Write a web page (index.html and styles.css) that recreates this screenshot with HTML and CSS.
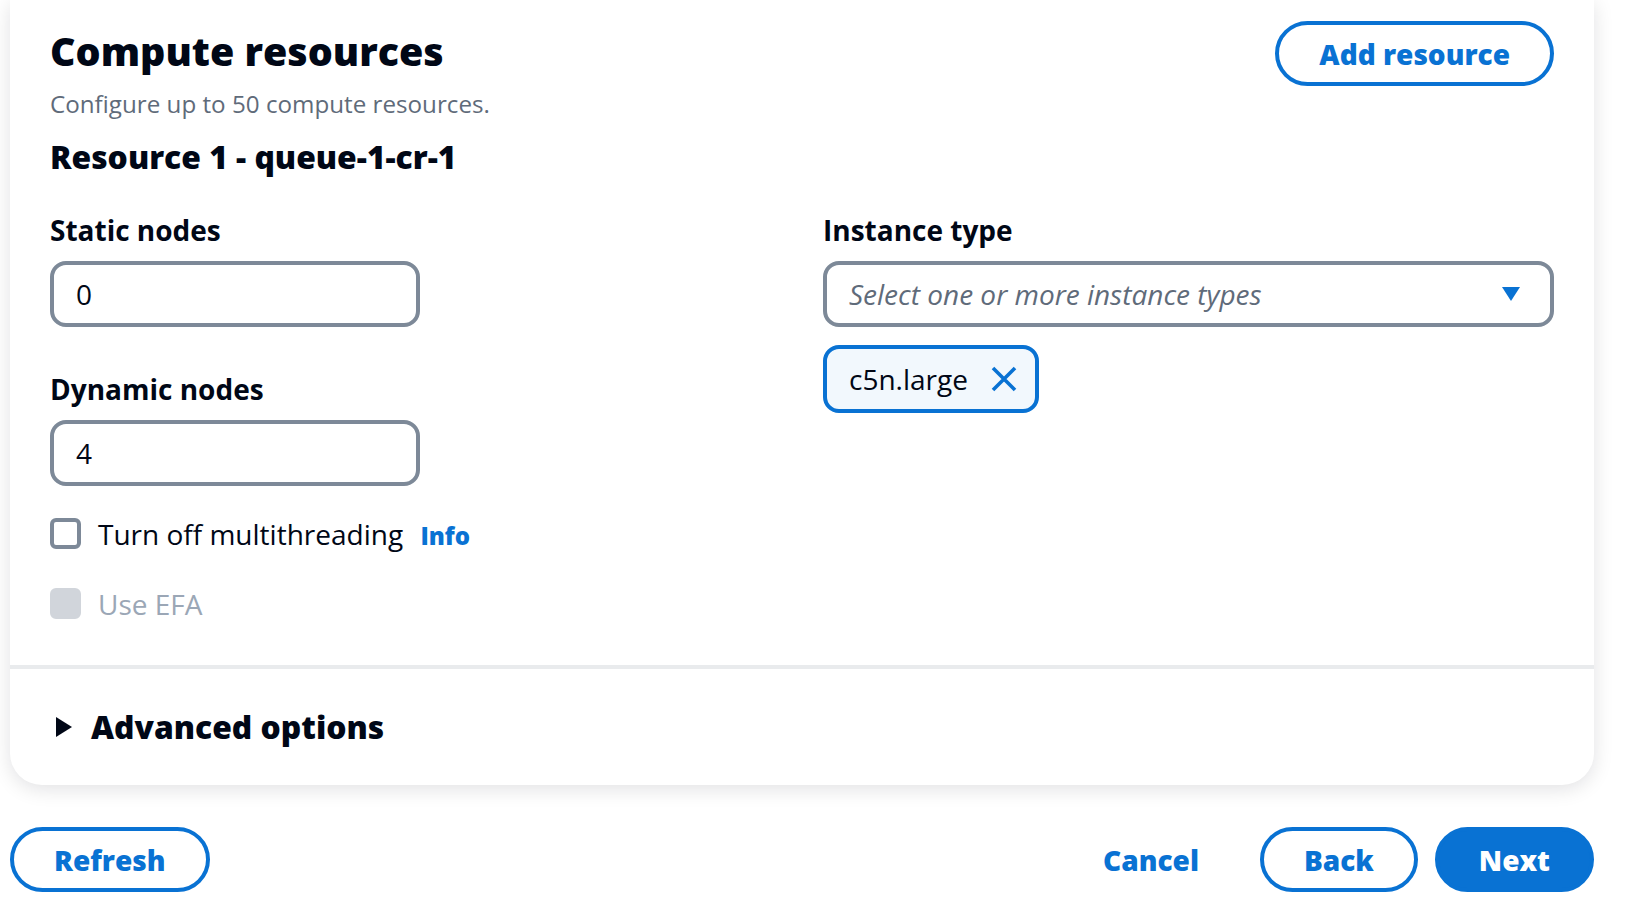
FILE: index.html
```html
<!DOCTYPE html>
<html>
<head>
    <meta charset="utf-8">
    <title>Compute resources</title>
    <link rel="stylesheet" href="styles.css">
</head>
<body>
    <div class="page">
        <div class="card">
            <div class="card-body">
                <div class="header">
                    <div class="header-text">
                        <h2 class="title">Compute resources</h2>
                        <p class="desc">Configure up to 50 compute resources.</p>
                    </div>
                    <button class="btn">Add resource</button>
                </div>
                <h3 class="resource-title">Resource 1 - queue-1-cr-1</h3>
                <div class="columns">
                    <div class="col">
                        <div class="field">
                            <label class="label" for="static_nodes">Static nodes</label>
                            <input class="input" type="text" id="static_nodes" value="0">
                        </div>
                        <div class="field field-next">
                            <label class="label" for="dynamic_nodes">Dynamic nodes</label>
                            <input class="input" type="text" id="dynamic_nodes" value="4">
                        </div>
                        <label class="check-row">
                            <input class="check" type="checkbox">
                            <span class="check-text">Turn off multithreading <a class="info" href="#">Info</a></span>
                        </label>
                        <label class="check-row check-row-next">
                            <input class="check" type="checkbox" disabled>
                            <span class="check-text disabled">Use EFA</span>
                        </label>
                    </div>
                    <div class="col">
                        <div class="field">
                            <span class="label">Instance type</span>
                            <div class="select">
                                <span class="placeholder">Select one or more instance types</span>
                                <svg class="caret" width="20" height="16" viewBox="0 0 20 16"><polygon points="1,1 19,1 10,15" fill="#0972d3"/></svg>
                            </div>
                        </div>
                        <div class="token">
                            <span>c5n.large</span>
                            <svg width="28" height="28" viewBox="0 0 28 28"><path d="M3 3 L25 25 M25 3 L3 25" stroke="#0972d3" stroke-width="3.6" fill="none"/></svg>
                        </div>
                    </div>
                </div>
            </div>
            <div class="expander">
                <svg width="32" height="32" viewBox="0 0 32 32"><polygon points="6,6 22,16 6,26" fill="#000716"/></svg>
                <span class="expander-title">Advanced options</span>
            </div>
        </div>
        <div class="footer">
            <button class="btn">Refresh</button>
            <div class="actions">
                <button class="btn btn-link">Cancel</button>
                <button class="btn">Back</button>
                <button class="btn btn-primary">Next</button>
            </div>
        </div>
    </div>
</body>
</html>
```

FILE: styles.css
```css
body {
    font-family: "Open Sans", "Liberation Sans", sans-serif;
    font-size: 28px;
    line-height: 40px;
    color: #000716;
    background-color: #FFF;
    margin: 0;
}

.page {
    padding: 0 58px 0 10px;
}

.card {
    background: #FFF;
    border-radius: 0 0 32px 32px;
    box-shadow: 0 4px 20px rgba(0, 7, 22, 0.12);
}

.card-body {
    padding: 21px 40px 41px;
}

.header {
    display: flex;
    justify-content: space-between;
    align-items: flex-start;
}

.title {
    font-size: 39.4px;
    font-weight: 800;
    line-height: 49px;
    margin: 6px 0 0;
}

.desc {
    font-size: 24.2px;
    line-height: 32px;
    color: #5f6b7a;
    margin: 12px 0 0;
}

.resource-title {
    font-size: 31.8px;
    font-weight: 800;
    line-height: 44px;
    margin: 15px 0 0;
}

.columns {
    display: grid;
    grid-template-columns: 1fr 1fr;
    column-gap: 42px;
    margin-top: 31px;
}

.field {
    display: flex;
    flex-direction: column;
    gap: 11px;
}

.field-next {
    margin-top: 42px;
}

.label {
    font-weight: 700;
}

.input {
    box-sizing: border-box;
    width: 370px;
    height: 66px;
    border: 4px solid #7d8998;
    border-radius: 16px;
    padding: 0 22px;
    font: inherit;
    color: #000716;
    outline: none;
}

.check-row {
    display: flex;
    align-items: flex-start;
    gap: 17px;
    margin-top: 28px;
}

.check {
    appearance: none;
    box-sizing: border-box;
    width: 31px;
    height: 31px;
    margin: 4px 0 0;
    border: 4px solid #7d8998;
    border-radius: 6px;
    background: #FFF;
}

.check:disabled {
    border-color: #d1d5db;
    background: #d1d5db;
}

.check-text.disabled {
    color: #9ba7b6;
}

.info {
    font-size: 24px;
    font-weight: 800;
    color: #0972d3;
    text-decoration: none;
    margin-left: 10px;
}

.select {
    box-sizing: border-box;
    height: 66px;
    border: 4px solid #7d8998;
    border-radius: 16px;
    padding: 0 29px 0 22px;
    display: flex;
    align-items: center;
    justify-content: space-between;
}

.placeholder {
    font-style: italic;
    color: #5f6b7a;
}

.token {
    box-sizing: border-box;
    display: inline-flex;
    align-self: flex-start;
    align-items: center;
    gap: 22px;
    height: 68px;
    margin-top: 18px;
    padding: 0 17px 0 22px;
    border: 4px solid #0972d3;
    border-radius: 16px;
    background: #f2f8fd;
}

.col {
    display: flex;
    flex-direction: column;
}

.expander {
    display: flex;
    align-items: center;
    gap: 9px;
    border-top: 4px solid #e9ebed;
    padding: 36px 40px;
}

.expander-title {
    font-size: 31.8px;
    font-weight: 800;
    line-height: 44px;
}

.footer {
    display: flex;
    justify-content: space-between;
    margin-top: 42px;
}

.actions {
    display: flex;
    gap: 17px;
}

.btn {
    box-sizing: border-box;
    height: 65px;
    padding: 0 40px;
    border: 4px solid #0972d3;
    border-radius: 33px;
    background: #FFF;
    color: #0972d3;
    font-family: inherit;
    font-size: 28px;
    font-weight: 800;
    cursor: pointer;
}

.btn-link {
    border-color: transparent;
}

.btn-primary {
    background: #0972d3;
    color: #FFF;
}
```
